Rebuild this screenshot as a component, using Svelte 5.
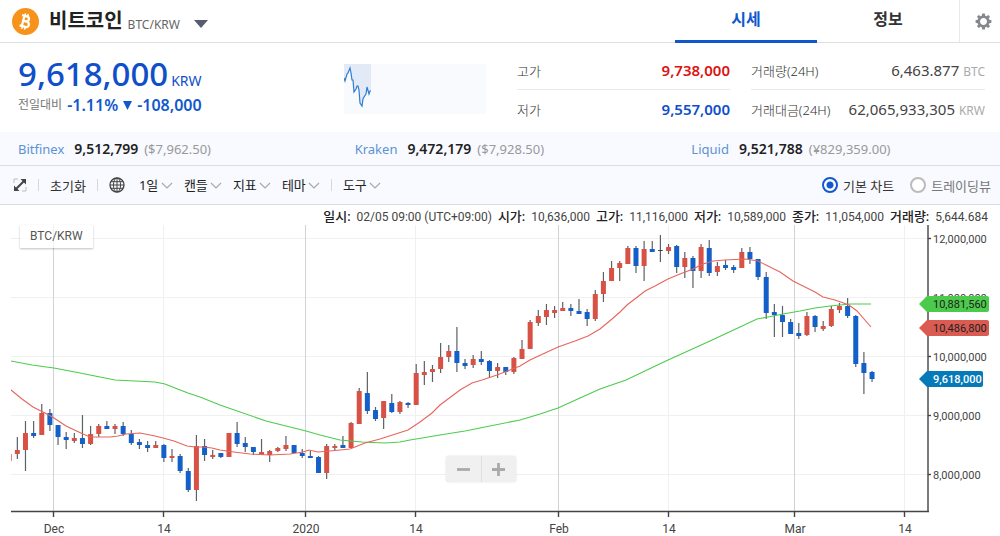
<script lang="ts">
	type Candle = [high: number, top: number, bottom: number, low: number, kind: 'up' | 'down' | 'flat'];

	let tab = $state('price');
	let chartType = $state('basic');

	const tabs = [
		{ id: 'price', label: '시세' },
		{ id: 'info', label: '정보' }
	];

	const exchanges = [
		{ name: 'Bitfinex', price: '9,512,799', foreign: '($7,962.50)' },
		{ name: 'Kraken', price: '9,472,179', foreign: '($7,928.50)' },
		{ name: 'Liquid', price: '9,521,788', foreign: '(¥829,359.00)' }
	];

	const menus = ['1일', '캔들', '지표', '테마', '도구'];

	const legend = [
		['일시:', '02/05 09:00 (UTC+09:00)'],
		['시가:', '10,636,000'],
		['고가:', '11,116,000'],
		['저가:', '10,589,000'],
		['종가:', '11,054,000'],
		['거래량:', '5,644.684']
	];

	const priceTicks = [
		{ y: 14, label: '12,000,000' },
		{ y: 73, label: '11,000,000' },
		{ y: 132, label: '10,000,000' },
		{ y: 191, label: '9,000,000' },
		{ y: 250, label: '8,000,000' }
	];

	const dateTicks = [
		{ x: 54, label: 'Dec', major: true },
		{ x: 164, label: '14', major: false },
		{ x: 306, label: '2020', major: true },
		{ x: 416, label: '14', major: false },
		{ x: 559, label: 'Feb', major: true },
		{ x: 669, label: '14', major: false },
		{ x: 795, label: 'Mar', major: true },
		{ x: 905, label: '14', major: false }
	];

	const tags = [
		{ y: 79, width: 62, label: '10,881,560', kind: 'long' },
		{ y: 103, width: 62, label: '10,486,800', kind: 'short' },
		{ y: 154, width: 56, label: '9,618,000', kind: 'last' }
	];

	// h = high, t/b = body edges, l = low, then u(p) / d(own) / f(lat)
	const series = `
		454 454 461 461 u,437 450 454 459 u,421 433 450 471 u,421 433 436 438 d,404 413 435 435 u,
		409 413 425 431 d,425 425 437 445 d,432 437 440 449 d,433 438 441 443 u,415 438 444 448 d,
		426 434 444 445 u,424 426 434 437 u,421 426 429 429 d,424 426 429 434 u,422 426 434 436 d,
		430 434 443 445 d,439 442 445 449 d,441 445 448 452 d,441 445 448 448 u,444 445 458 462 d,
		449 456 458 462 u,454 456 471 473 d,468 471 490 492 d,435 446 490 501 u,439 446 455 461 d,
		450 455 457 459 u,453 453 457 458 d,433 433 457 457 u,422 433 444 447 d,437 443 447 452 d,
		447 447 452 455 d,439 452 455 455 u,450 451 455 462 u,447 448 451 452 u,436 445 449 451 u,
		445 445 453 453 d,449 453 456 458 d,451 456 458 458 d,456 457 473 473 d,444 446 473 479 u,
		444 446 448 451 u,436 445 448 448 d,422 423 448 448 u,388 391 424 424 u,372 393 411 414 d,
		407 410 419 421 d,401 401 418 429 u,394 403 412 413 d,401 402 412 414 u,402 403 405 408 d,
		364 373 405 405 u,361 372 375 385 u,365 369 372 382 u,343 357 369 373 u,345 351 357 362 u,
		327 351 363 372 d,359 363 366 369 d,355 359 365 368 u,351 359 362 365 d,360 361 371 378 d,
		363 367 371 378 u,367 367 372 375 d,357 358 372 374 u,340 349 359 359 u,320 322 349 349 u,
		310 316 323 326 u,304 310 317 325 u,306 310 313 318 u,302 308 311 311 u,304 308 311 316 d,
		299 311 314 314 d,309 312 319 326 d,290 294 319 321 u,272 281 294 302 u,261 268 281 281 u,
		261 263 268 281 u,246 248 264 264 u,246 248 266 273 d,241 249 266 281 u,241 249 252 252 d,
		235 250 251 262 f,244 247 251 254 u,245 246 267 273 d,252 258 267 278 u,256 258 271 288 d,
		244 247 271 278 u,240 248 273 276 d,262 266 272 276 u,260 265 268 270 d,265 267 270 273 d,
		248 252 268 268 u,247 252 259 264 d,259 259 277 280 d,272 277 313 319 d,304 312 315 337 d,
		306 315 322 337 d,319 322 334 334 d,323 333 336 339 d,312 316 335 336 u,315 316 327 332 d,
		321 326 329 331 u,306 309 326 327 u,303 306 310 313 u,298 306 316 318 d,315 316 364 367 d,
		352 363 373 394 d,371 372 379 382 d`;

	const kinds = { u: 'up', d: 'down', f: 'flat' } as const;
	const candles: Candle[] = series.split(',').map((row) => {
		const [h, t, b, l, k] = row.trim().split(' ');
		return [+h, +t, +b, +l, kinds[k as keyof typeof kinds]];
	});

	const candleX = (i: number) => 9.2 + i * 8.14;

	const shortAverage =
		'11,390 22,399 33,407 45,413 54,418 66,426 83,434 90,437 98,437 110,437 118,436 126,434 140,433 155,436 163,438 174,441 187,446 195,447 203,447 212,448 220,450 234,452 250,454 270,455 290,454 303,452 309,450 318,452 330,451 350,449 365,443 380,439 408,430 420,422 432,413 440,405 452,396 460,390 472,383 482,380 497,375 510,370 520,366 530,360 545,353 558,347 575,341 588,336 600,329 612,319 620,312 627,305 640,295 645,291 655,286 668,279 680,274 693,269 703,264 713,261 725,260 745,259 752,260 758,261 766,265 780,272 793,281 815,292 823,297 835,300 849,305 857,311 871,327';
	const longAverage =
		'11,361 32,365 54,368 75,372 95,376 115,380 135,381 155,382 165,384 175,388 188,393 200,397 220,405 266,421 306,431 320,435 340,440 362,442 385,443 400,442 410,440 440,435 465,431 485,427 520,420 540,414 558,408 580,398 600,389 626,380 668,360 710,341 740,327 757,319 768,317 783,314 800,311 815,308 830,306 850,304 871,304';
</script>

<div class="page">
	<header class="header">
		<svg class="coin" viewBox="0 0 28 28" aria-hidden="true">
			<circle cx="14" cy="14" r="14" fill="#f7931a" />
			<g transform="rotate(14 14 14)" fill="none" stroke="#fff" stroke-width="2.4">
				<path d="M11.5 8.5v11M9 8.5h5.7a2.7 2.7 0 0 1 0 5.3h-3.2M9 19.5h6.3a2.8 2.8 0 0 0 0-5.7h-3.8" />
				<path d="M12 5.8v3M15 5.8v3M12 19.4v3M15 19.4v3" stroke-width="1.6" />
			</g>
		</svg>
		<h1>비트코인</h1>
		<span class="pair">BTC/KRW</span>
		<button class="coin-menu" aria-label="코인 선택">
			<svg viewBox="0 0 14 8"><path d="M0 0h14L7 8z" fill="#565d70" /></svg>
		</button>
		<nav class="tabs">
			{#each tabs as item}
				<button class="tab" class:active={tab === item.id} onclick={() => (tab = item.id)}>
					{item.label}
				</button>
			{/each}
		</nav>
		<button class="settings" aria-label="설정">
			<svg viewBox="-9 -9 18 18">
				<circle r="5" fill="none" stroke="#85888f" stroke-width="2.6" />
				{#each [0, 45, 90, 135, 180, 225, 270, 315] as angle}
					<path d="M-2-5.6-1.3-8.4h2.6L2-5.6z" fill="#85888f" transform="rotate({angle})" />
				{/each}
			</svg>
		</button>
	</header>

	<section class="summary">
		<div class="quote">
			<div class="price"><strong>9,618,000</strong><span>KRW</span></div>
			<div class="change">
				<span>전일대비</span>
				<strong>-1.11%</strong>
				<svg viewBox="0 0 10 10" aria-hidden="true"><path d="M0 0h10L5 10z" fill="#0f59cd" /></svg>
				<strong>-108,000</strong>
			</div>
		</div>
		<svg class="spark" viewBox="0 0 142 50" aria-hidden="true">
			<rect width="142" height="50" fill="#f8fafd" />
			<path
				d="M0 0h27v27h-1l-1 3-2-7-1 7-2 3-1 2-1 7-2-3-1-13-1-4h-1l-1 3-2 3-1-12H8L7 9 6 4 4 9 1 17 0 14z"
				fill="#e1eaf6"
			/>
			<polyline
				points="0,14 1,17 3,10 4,9 6,4 7,9 8,16 9,16 10,28 12,25 13,22 14,22 15,26 16,39 18,42 19,35 20,33 22,30 23,23 25,30 26,27 27,27"
				fill="none"
				stroke="#2d7dd2"
				stroke-width="1.2"
			/>
		</svg>
		<dl class="stats range">
			<div><dt>고가</dt><dd class="high">9,738,000</dd></div>
			<div><dt>저가</dt><dd class="low">9,557,000</dd></div>
		</dl>
		<dl class="stats">
			<div><dt>거래량(24H)</dt><dd>6,463.877 <small>BTC</small></dd></div>
			<div><dt>거래대금(24H)</dt><dd>62,065,933,305 <small>KRW</small></dd></div>
		</dl>
	</section>

	<section class="exchanges">
		{#each exchanges as exchange}
			<div class="exchange">
				<a href="#{exchange.name}">{exchange.name}</a>
				<strong>{exchange.price}</strong>
				<span>{exchange.foreign}</span>
			</div>
		{/each}
	</section>

	<div class="toolbar">
		<button class="icon" aria-label="전체 화면">
			<svg viewBox="0 0 14 14">
				<path d="M1 5V1h4M9 13h4V9" fill="none" stroke="#bbb" />
				<path d="M3 11l8-8" stroke="#444" stroke-width="2" />
				<path d="M7.5 1H13v5.500zM1 7.500V13h5.500z" fill="#444" />
			</svg>
		</button>
		<span class="divider"></span>
		<button class="reset">초기화</button>
		<span class="divider"></span>
		<button class="globe" aria-label="시간대">
			<svg viewBox="0 0 16 16" fill="none" stroke="#444">
				<circle cx="8" cy="8" r="7" stroke-width="1.3" />
				<ellipse cx="8" cy="8" rx="3.6" ry="7" />
				<path d="M8 1v14M1 8h14M2 4.7h12M2 11.3h12" />
			</svg>
		</button>
		{#each menus as menu, i}
			{#if i === 4}<span class="divider"></span>{/if}
			<label class="menu">
				<select aria-label={menu}><option>{menu}</option></select>
				<svg viewBox="0 0 12 7" aria-hidden="true">
					<path d="M1 1l5 5 5-5" fill="none" stroke="#a5a8ae" stroke-width="1.2" />
				</svg>
			</label>
		{/each}
		<div class="chart-types">
			<label>
				<input type="radio" name="chart" value="basic" bind:group={chartType} />
				기본 차트
			</label>
			<label>
				<input type="radio" name="chart" value="tradingview" bind:group={chartType} />
				트레이딩뷰
			</label>
		</div>
	</div>

	<main class="chart">
		<div class="legend">
			{#each legend as [name, value]}
				<span><b>{name}</b> {value}</span>
			{/each}
		</div>
		<div class="plot">
			<svg viewBox="0 0 1000 311" role="img" aria-label="BTC/KRW">
				{#each priceTicks as tick}
					<path class="grid" d="M11 {tick.y - 0.5}H928" />
				{/each}
				{#each dateTicks as tick}
					<path class="grid" class:major={tick.major} d="M{tick.x - 0.5} 0V286" />
				{/each}

				<clipPath id="plot-area"><rect x="11" y="0" width="917" height="286" /></clipPath>
				<g clip-path="url(#plot-area)">
					<g transform="translate(0 -225)">
						{#each candles as [high, top, bottom, low, kind], i}
							<path class="wick" d="M{candleX(i)} {high}V{low}" />
							<rect
								class={kind}
								x={candleX(i) - 2.5}
								y={top}
								width="5"
								height={bottom - top}
								rx="0.5"
							/>
						{/each}
						<polyline class="average long" points={longAverage} />
						<polyline class="average short" points={shortAverage} />
					</g>
				</g>

				<path class="axis" d="M928 0V286.5M11 286.5H929" />
				{#each priceTicks as tick}
					<path class="axis" d="M928 {tick.y - 0.5}h3" />
					<text class="price-label" x="933" y={tick.y + 4}>{tick.label}</text>
				{/each}
				{#each dateTicks as tick}
					<path class="axis" d="M{tick.x - 0.5} 286v6" />
					<text class="date-label" x={tick.x} y="308">{tick.label}</text>
				{/each}

				{#each tags as tag}
					<g class="tag {tag.kind}" transform="translate(919 {tag.y})">
						<path d="M0 0l8-8h{tag.width - 2}q2 0 2 2v12q0 2-2 2H8z" />
						<text x="14" y="4">{tag.label}</text>
					</g>
				{/each}
			</svg>
			<span class="symbol">BTC/KRW</span>
			<div class="zoom">
				<button aria-label="축소">
					<svg viewBox="0 0 14 14"><path d="M0 7h14" /></svg>
				</button>
				<button aria-label="확대">
					<svg viewBox="0 0 14 14"><path d="M0 7h14M7 0v14" /></svg>
				</button>
			</div>
		</div>
	</main>
</div>

<style>
	:global(body) {
		background: #fff;
	}

	.page {
		font-family: 'Noto Sans', 'Noto Sans CJK KR', sans-serif;
		font-size: 14px;
		color: #333;
	}

	button,
	select {
		padding: 0;
		border: 0;
		background: none;
		font: inherit;
		color: inherit;
		cursor: pointer;
	}

	svg {
		display: block;
	}

	.header {
		display: flex;
		align-items: center;
		height: 42px;
		padding-left: 12px;
		border-bottom: 1px solid #dddfe3;
	}

	.coin {
		width: 27px;
		height: 27px;
	}

	h1 {
		margin: 0 5px 0 10px;
		font-size: 20px;
		line-height: 28px;
		font-weight: 700;
		color: #222;
	}

	.pair {
		padding-top: 6px;
		font-size: 12px;
		color: #666;
	}

	.coin-menu {
		margin-left: 14px;
		padding-top: 6px;
	}

	.coin-menu svg {
		width: 14px;
		height: 8px;
	}

	.tabs {
		display: flex;
		align-self: stretch;
		margin: 0 0 -1px auto;
	}

	.tab {
		width: 142px;
		padding-bottom: 4px;
		border-bottom: 3px solid transparent;
		font-size: 16px;
		font-weight: 700;
	}

	.tab.active {
		border-color: #0f59cd;
		color: #0f59cd;
	}

	.settings {
		display: grid;
		place-items: center;
		align-self: stretch;
		width: 41px;
		padding-left: 6px;
		border-left: 1px solid #e6e8ec;
	}

	.settings svg {
		width: 17px;
		height: 17px;
	}

	.summary {
		display: grid;
		grid-template-columns: 1fr 142px 223px 234px;
		column-gap: 21px;
		height: 89px;
		padding: 0 15px 0 18px;
	}

	.price {
		display: flex;
		align-items: baseline;
		gap: 3px;
		height: 54px;
		color: #0f4fc9;
	}

	.price strong {
		font-size: 33px;
		line-height: 62px;
		font-weight: 500;
	}

	.change {
		display: flex;
		align-items: center;
		gap: 5px;
		line-height: 16px;
		color: #0f59cd;
	}

	.change span {
		font-size: 12px;
		color: #777;
	}

	.change strong {
		font-size: 16px;
		font-weight: 600;
	}

	.change svg {
		width: 9px;
		height: 9px;
	}

	.spark {
		width: 142px;
		height: 50px;
		margin-top: 21px;
	}

	.stats {
		margin: 8px 0 0;
	}

	.range {
		margin-left: 10px;
	}

	.stats div {
		display: flex;
		align-items: center;
		justify-content: space-between;
		height: 38px;
		white-space: nowrap;
	}

	.stats div + div {
		border-top: 1px solid #e8eaee;
	}

	dt {
		font-size: 13px;
		font-weight: 300;
	}

	dd {
		margin: 0;
		font-size: 15px;
		color: #444;
	}

	dd.high,
	dd.low {
		font-weight: 600;
	}

	dd.high {
		color: #dd1212;
	}

	dd.low {
		color: #0f4fc9;
	}

	small {
		font-size: 12px;
		color: #aaa;
	}

	.exchanges {
		display: grid;
		grid-template-columns: 12fr 12fr 11fr;
		align-items: center;
		height: 33px;
		padding-left: 18px;
		background: #f8faff;
		border-bottom: 1px solid #d9dce3;
	}

	.exchange {
		display: flex;
		align-items: baseline;
		gap: 6px;
		line-height: 18px;
	}

	.exchange a {
		margin-right: 4px;
		font-size: 13px;
		text-decoration: none;
		color: #5b93d3;
	}

	.exchange strong {
		font-size: 14px;
		font-weight: 600;
		color: #222;
	}

	.exchange span {
		font-size: 13px;
		color: #999;
	}

	.toolbar {
		display: flex;
		align-items: center;
		height: 38px;
		padding: 0 9px 0 13px;
		background: #f8faff;
		border-bottom: 1px solid #d9dce3;
		font-size: 13px;
	}

	.icon svg {
		width: 14px;
		height: 14px;
	}

	.divider {
		width: 1px;
		height: 12px;
		margin: 0 11px;
		background: #d5d8de;
	}

	.globe {
		margin-right: 14px;
	}

	.globe svg {
		width: 16px;
		height: 16px;
	}

	.menu {
		display: flex;
		align-items: center;
		margin-right: 11px;
	}

	.menu:has(+ .divider) {
		margin-right: 0;
	}

	.menu select {
		appearance: none;
		margin-right: -12px;
		padding-right: 14px;
		color: #222;
	}

	.menu svg {
		width: 12px;
		height: 7px;
		pointer-events: none;
	}

	.chart-types {
		display: flex;
		gap: 16px;
		margin-left: auto;
	}

	.chart-types label {
		display: flex;
		align-items: center;
		gap: 5px;
		color: #777;
	}

	.chart-types label:has(:checked) {
		color: #333;
	}

	.chart-types input {
		appearance: none;
		width: 16px;
		height: 16px;
		margin: 0;
		border: 2px solid #bbb;
		border-radius: 50%;
		background: #fff;
	}

	.chart-types input:checked {
		border-color: #1259d0;
		background: radial-gradient(#1259d0 3px, #fff 4px);
	}

	.chart {
		font-family: Roboto, 'Noto Sans CJK KR', sans-serif;
	}

	.legend {
		display: flex;
		justify-content: flex-end;
		gap: 6px;
		height: 20px;
		padding: 0 12px 0 0;
		font-size: 12px;
		line-height: 24px;
		white-space: nowrap;
		color: #444;
	}

	.legend b {
		margin-right: 3px;
		font-size: 13px;
		font-weight: 500;
		color: #222;
	}

	.plot {
		position: relative;
	}

	.plot > svg {
		width: 100%;
	}

	.grid {
		stroke: #eff0f1;
	}

	.grid.major {
		stroke: #d2d2d2;
	}

	.wick {
		stroke: #5c6166;
		stroke-width: 1.2;
	}

	.up {
		fill: #d75145;
	}

	.down {
		fill: #1360c8;
	}

	.flat {
		fill: #444;
	}

	.average {
		fill: none;
		stroke-width: 1.1;
	}

	.average.short {
		stroke: #e5665c;
	}

	.average.long {
		stroke: #4dcb4d;
	}

	.axis {
		fill: none;
		stroke: #444;
		stroke-width: 1.4;
	}

	.price-label,
	.tag text {
		font-size: 11px;
		fill: #444;
	}

	.date-label {
		font-size: 12px;
		text-anchor: middle;
		fill: #444;
	}

	.tag text {
		fill: #222;
	}

	.tag.long path {
		fill: #4cca4c;
	}

	.tag.short path {
		fill: #d95b52;
	}

	.tag.last path {
		fill: #0679b8;
	}

	.tag.last text {
		font-weight: 500;
		fill: #fff;
	}

	.symbol {
		position: absolute;
		top: 0;
		left: 20px;
		padding: 0 10px;
		background: rgba(255, 255, 255, 0.7);
		box-shadow: 0 1px 2px rgba(0, 0, 0, 0.25);
		font-size: 12px;
		line-height: 23px;
		color: #555;
	}

	.zoom {
		position: absolute;
		bottom: 54px;
		left: 44.6%;
		display: flex;
		width: 70px;
		height: 26px;
		border-radius: 3px;
		background: #f0f0f0;
		box-shadow: 0 0 2px rgba(0, 0, 0, 0.15);
	}

	.zoom button {
		display: grid;
		flex: 1;
		place-items: center;
	}

	.zoom button + button {
		border-left: 1px solid #dedede;
	}

	.zoom svg {
		width: 13px;
		height: 13px;
		stroke: #aaa;
		stroke-width: 3;
	}
</style>
